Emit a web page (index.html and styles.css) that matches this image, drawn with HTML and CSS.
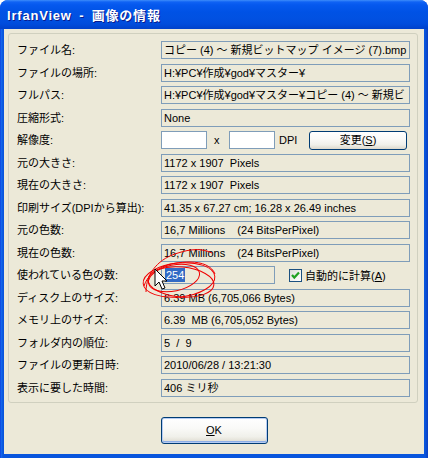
FILE: index.html
```html
<!DOCTYPE html>
<html lang="ja">
<head>
<meta charset="utf-8">
<title>IrfanView - 画像の情報</title>
<link rel="stylesheet" href="styles.css">
</head>
<body>
<div class="window">
  <div class="titlebar"><span class="title">IrfanView - 画像の情報</span></div>
  <div class="body">
    <div class="group">
      <span class="label">ファイル名:</span>
      <div class="field">コピー (4) ～ 新規ビットマップ イメージ (7).bmp</div>
      <span class="label">ファイルの場所:</span>
      <div class="field">H:¥PC¥作成¥god¥マスター¥</div>
      <span class="label">フルパス:</span>
      <div class="field">H:¥PC¥作成¥god¥マスター¥コピー (4) ～ 新規ビ</div>
      <span class="label">圧縮形式:</span>
      <div class="field">None</div>
      <span class="label">解像度:</span>
      <div class="res">
        <div class="inp"></div>
        <span class="times">x</span>
        <div class="inp"></div>
        <span class="dpi">DPI</span>
        <button class="btn change">変更(<u>S</u>)</button>
      </div>
      <span class="label">元の大きさ:</span>
      <div class="field">1172 x 1907&nbsp; Pixels</div>
      <span class="label">現在の大きさ:</span>
      <div class="field">1172 x 1907&nbsp; Pixels</div>
      <span class="label">印刷サイズ(DPIから算出):</span>
      <div class="field">41.35 x 67.27 cm; 16.28 x 26.49 inches</div>
      <span class="label">元の色数:</span>
      <div class="field">16,7 Millions&nbsp;&nbsp;&nbsp; (24 BitsPerPixel)</div>
      <span class="label">現在の色数:</span>
      <div class="field">16,7 Millions&nbsp;&nbsp;&nbsp; (24 BitsPerPixel)</div>
      <span class="label">使われている色の数:</span>
      <div class="colors">
        <div class="field short"><span class="sel">254</span></div>
        <span class="check"><svg width="11" height="11" viewBox="0 0 11 11"><path d="M2 5 L4.3 7.6 L9 2.6" fill="none" stroke="#21A121" stroke-width="2.2"/></svg></span>
        <span class="checklabel">自動的に計算(<u>A</u>)</span>
      </div>
      <span class="label">ディスク上のサイズ:</span>
      <div class="field">6.39 MB (6,705,066 Bytes)</div>
      <span class="label">メモリ上のサイズ:</span>
      <div class="field">6.39&nbsp; MB (6,705,052 Bytes)</div>
      <span class="label">フォルダ内の順位:</span>
      <div class="field">5&nbsp; /&nbsp; 9</div>
      <span class="label">ファイルの更新日時:</span>
      <div class="field">2010/06/28 / 13:21:30</div>
      <span class="label">表示に要した時間:</span>
      <div class="field">406 ミリ秒</div>
    </div>
    <div class="actions"><button class="btn ok"><u>O</u>K</button></div>
  </div>
  <svg class="overlay" width="428" height="458" viewBox="0 0 428 458">
    <g fill="none" stroke="#F00000" stroke-width="1">
      <ellipse cx="179" cy="280" rx="36" ry="17" transform="rotate(-6 179 280)"/>
      <ellipse cx="174" cy="278" rx="26" ry="13" transform="rotate(-12 174 278)"/>
      <ellipse cx="181" cy="282" rx="33" ry="15" transform="rotate(5 181 282)"/>
      <path d="M146 292 C146 272 160 258 178 253 C190 249 202 248 212 253"/>
      <path d="M144 286 C150 268 170 262 190 262 C202 262 212 266 215 274"/>
    </g>
    <path d="M155 269 L155 286 L159 282 L162 289 L165 288 L162 281 L167 281 Z" fill="#fff" stroke="#000" stroke-width="1" stroke-linejoin="miter"/>
  </svg>
</div>
</body>
</html>
```
FILE: styles.css
```css
html, body {
  margin: 0;
  padding: 0;
  background: #ffffff;
}
body {
  font-family: "Liberation Sans", "Noto Sans CJK JP", sans-serif;
  font-size: 11px;
  color: #000;
}
.window {
  position: relative;
  width: 428px;
  height: 458px;
  box-sizing: border-box;
  background: linear-gradient(90deg, #0831D9 0, #166AEE 1px, #0855DD 3px, #0855DD 425px, #0A3EC0 428px);
  border-radius: 8px 8px 0 0;
  display: flex;
  flex-direction: column;
  overflow: hidden;
}
.titlebar {
  flex: none;
  height: 29px;
  box-sizing: border-box;
  padding-left: 7px;
  display: flex;
  align-items: center;
  background: linear-gradient(180deg, #3D8CFA 0, #0F62F4 2px, #0558EE 5px, #0052E5 12px, #0151E2 18px, #004CDC 24px, #0041CA 29px);
}
.title {
  color: #fff;
  font-weight: bold;
  font-size: 13px;
  letter-spacing: 0.8px;
  word-spacing: 3px;
  text-shadow: 1px 1px 0 #0A1C8E;
  white-space: pre;
}
.body {
  flex: 1;
  margin: 0 4px 4px;
  background: #ECE9D8;
  display: flex;
  flex-direction: column;
  padding: 4px 0 0 4px;
}
.group {
  width: 410px;
  box-sizing: border-box;
  border: 1px solid #D0D0BF;
  border-radius: 3px;
  padding: 7px 7px 5px 8px;
  display: grid;
  grid-template-columns: 144px 1fr;
  grid-auto-rows: 18px;
  row-gap: 4.5px;
  align-items: center;
}
.label {
  line-height: 18px;
  white-space: nowrap;
}
.field {
  height: 18px;
  box-sizing: border-box;
  border: 1px solid #7F9DB9;
  padding: 0 2px;
  line-height: 16px;
  white-space: nowrap;
  overflow: hidden;
}
.res, .colors {
  display: flex;
  align-items: center;
  height: 18px;
}
.inp {
  width: 46px;
  height: 18px;
  box-sizing: border-box;
  border: 1px solid #7F9DB9;
  background: #fff;
}
.times {
  margin: 0 10px 0 7px;
  width: 5px;
}
.dpi {
  margin-left: 4px;
  width: 20px;
}
.btn {
  box-sizing: border-box;
  border: 1px solid #003C74;
  border-radius: 3px;
  background: linear-gradient(180deg, #FFFFFF 0, #FAFAF8 40%, #F0F0EA 75%, #DCD8CC 100%);
  font: inherit;
  color: #000;
  padding: 0;
  cursor: default;
}
.change {
  margin-left: 10px;
  width: 98px;
  height: 19px;
  line-height: 17px;
}
.short {
  width: 114px;
  flex: none;
  padding-left: 3px;
}
.sel {
  background: #316AC5;
  color: #fff;
  display: inline-block;
  line-height: 14px;
  padding: 0 1px;
}
.check {
  margin-left: 14px;
  width: 13px;
  height: 13px;
  box-sizing: border-box;
  border: 1px solid #1C5180;
  background: linear-gradient(135deg, #DCDCD7 0, #F4F4F0 60%, #FFFFFF 100%);
  display: flex;
  align-items: center;
  justify-content: center;
}
.check svg {
  display: block;
  flex: none;
}
.checklabel {
  margin-left: 3px;
  white-space: nowrap;
}
.actions {
  display: flex;
  justify-content: center;
  margin-top: 14px;
  padding-right: 4px;
}
.ok {
  width: 107px;
  height: 27px;
  box-shadow: inset 0 0 0 1px #B6CCF3, inset 0 -1px 0 1px #8DAEE6;
}
.overlay {
  position: absolute;
  left: 0;
  top: 0;
  pointer-events: none;
}
```
